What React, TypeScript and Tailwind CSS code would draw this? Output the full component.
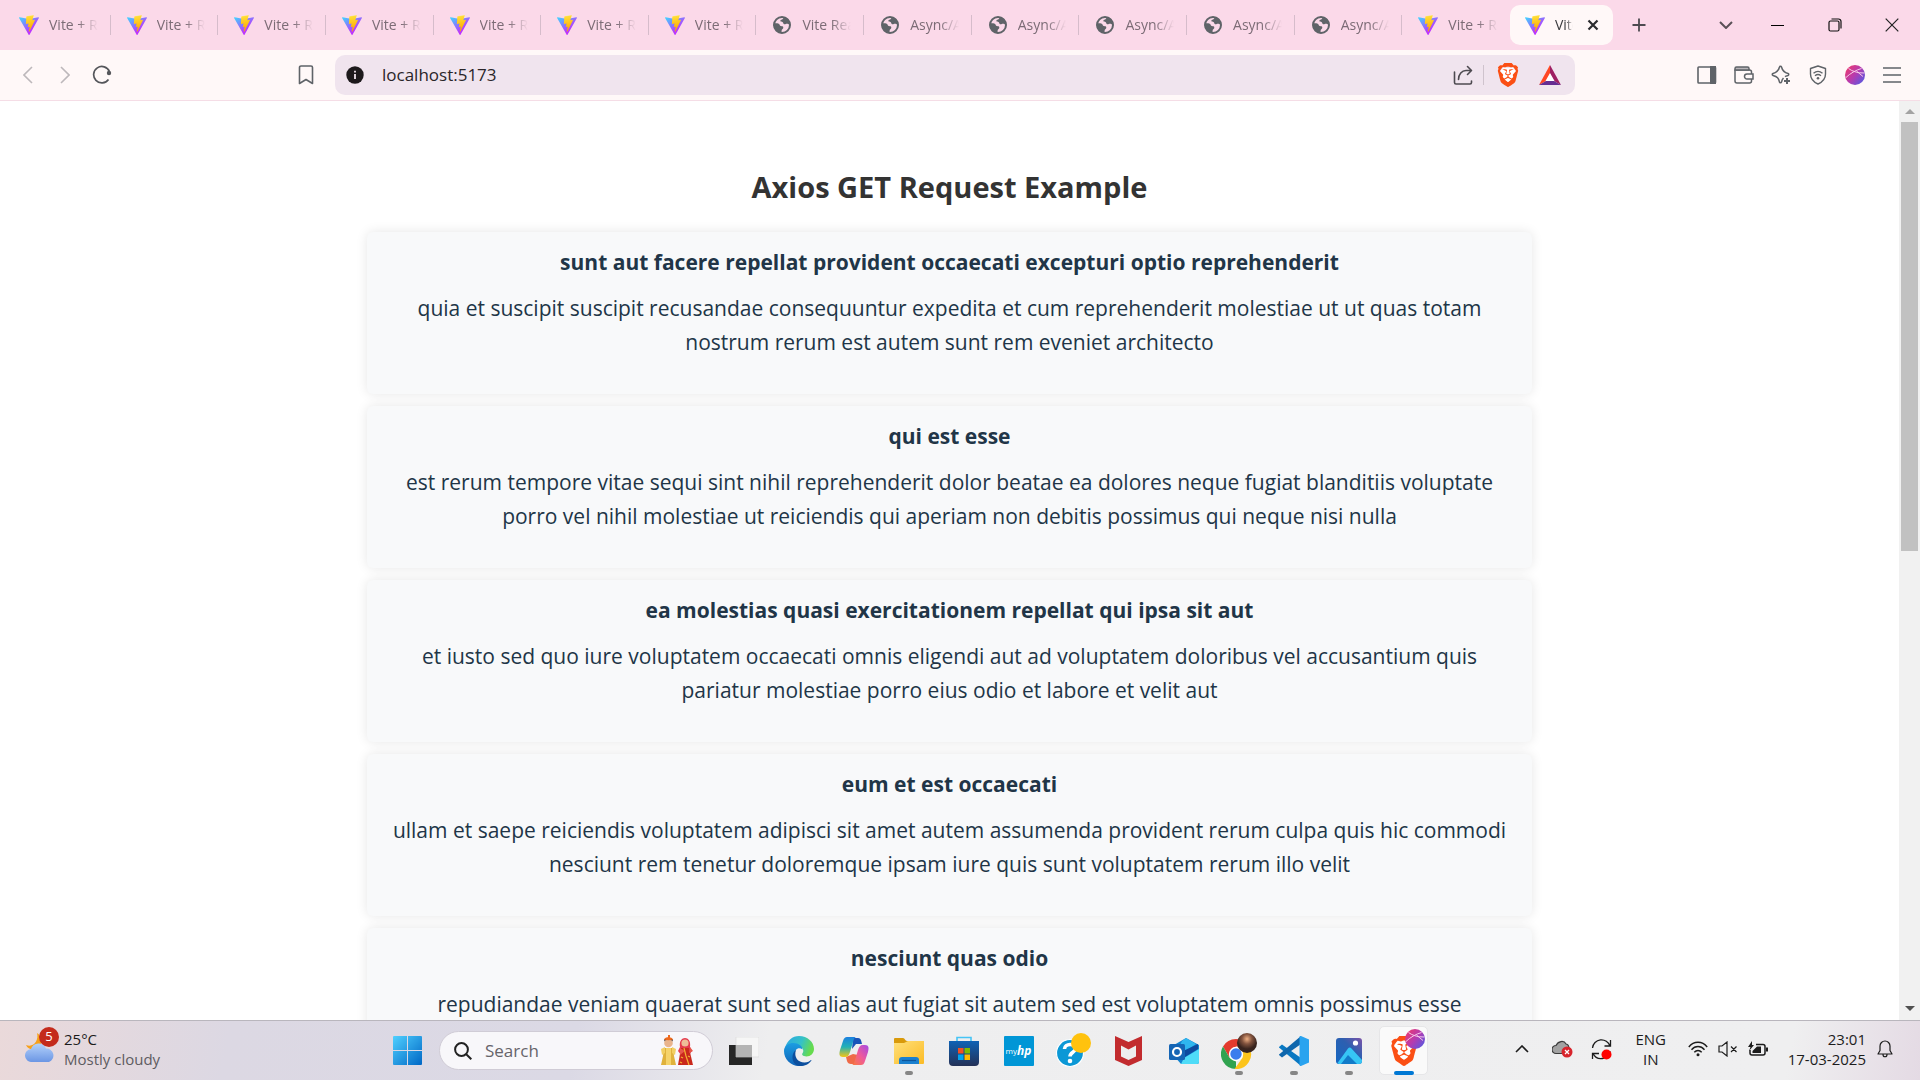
import type { ReactNode } from "react";
import { SiBrave } from "react-icons/si";

type TabKind = "vite" | "globe";
type TabItem = { kind: TabKind; title: string };

const TABS: TabItem[] = [
  ...Array.from({ length: 7 }, (): TabItem => ({ kind: "vite", title: "Vite + React" })),
  { kind: "globe", title: "Vite React" },
  ...Array.from({ length: 5 }, (): TabItem => ({ kind: "globe", title: "Async/Await" })),
  { kind: "vite", title: "Vite + React" },
];

const POSTS = [
  {
    title: "sunt aut facere repellat provident occaecati excepturi optio reprehenderit",
    body: "quia et suscipit suscipit recusandae consequuntur expedita et cum reprehenderit molestiae ut ut quas totam nostrum rerum est autem sunt rem eveniet architecto",
  },
  {
    title: "qui est esse",
    body: "est rerum tempore vitae sequi sint nihil reprehenderit dolor beatae ea dolores neque fugiat blanditiis voluptate porro vel nihil molestiae ut reiciendis qui aperiam non debitis possimus qui neque nisi nulla",
  },
  {
    title: "ea molestias quasi exercitationem repellat qui ipsa sit aut",
    body: "et iusto sed quo iure voluptatem occaecati omnis eligendi aut ad voluptatem doloribus vel accusantium quis pariatur molestiae porro eius odio et labore et velit aut",
  },
  {
    title: "eum et est occaecati",
    body: "ullam et saepe reiciendis voluptatem adipisci sit amet autem assumenda provident rerum culpa quis hic commodi nesciunt rem tenetur doloremque ipsam iure quis sunt voluptatem rerum illo velit",
  },
  {
    title: "nesciunt quas odio",
    body: "repudiandae veniam quaerat sunt sed alias aut fugiat sit autem sed est voluptatem omnis possimus esse voluptatibus quis est aut tenetur dolor neque",
  },
];

function ViteLogo() {
  return (
    <svg viewBox="0 0 256 257" className="size-5 shrink-0">
      <defs>
        <linearGradient id="viteA" x1="-.8%" x2="57.6%" y1="7.7%" y2="78.4%">
          <stop offset="0" stopColor="#41D1FF" />
          <stop offset="1" stopColor="#BD34FE" />
        </linearGradient>
        <linearGradient id="viteB" x1="43.4%" x2="50.3%" y1="2.2%" y2="89%">
          <stop offset="0" stopColor="#FFEA83" />
          <stop offset=".083" stopColor="#FFDD35" />
          <stop offset="1" stopColor="#FFA800" />
        </linearGradient>
      </defs>
      <path fill="url(#viteA)" d="m255.153 37.938l-120.283 215.09c-2.483 4.44-8.862 4.467-11.382.048L.875 38.014c-2.746-4.814 1.371-10.646 6.827-9.67l120.385 21.517a6.537 6.537 0 0 0 2.322-.004l117.867-21.483c5.438-.991 9.574 4.796 6.877 9.564Z" />
      <path fill="url(#viteB)" d="M185.432.063L96.44 17.501a3.268 3.268 0 0 0-2.634 3.014l-5.474 92.456a3.268 3.268 0 0 0 3.997 3.378l24.777-5.718c2.318-.535 4.413 1.507 3.936 3.838l-7.361 36.047c-.495 2.426 1.782 4.5 4.151 3.78l15.304-4.649c2.372-.72 4.652 1.36 4.15 3.788l-11.698 56.621c-.732 3.542 3.979 5.473 5.943 2.437l1.313-2.028l72.516-144.72c1.215-2.423-.88-5.186-3.54-4.672l-25.505 4.922c-2.396.462-4.435-1.77-3.759-4.114l16.646-57.705c.677-2.35-1.37-4.583-3.769-4.113Z" />
    </svg>
  );
}

function GlobeIcon() {
  return (
    <svg viewBox="0 0 20 20" className="size-5 shrink-0">
      <circle cx="10" cy="10" r="8" fill="none" stroke="#5f6368" strokeWidth="2" />
      <path fill="#5f6368" d="M2 8.200c2 .1 4.200-.4 5.200.8.7.9.4 1.800 1.700 2.100 1.200.2 2.500.2 2.400 1.600-.1 1.200-1.300 1.400-1.600 2.400-.2.9-.1 2-.2 3.100C4.500 17.500 1.200 13.600 2 8.200Z" />
      <path fill="#5f6368" d="M11.500 2c-.2 1.300-.2 1.900-1.400 2.400-1.100.4-1.900.6-1.700 1.700.2.900 1.300.6 2.100 1 .9.400.5 1.800 1.600 2.100 1.300.3 1.600-.4 2.800-.4 1 0 1.700.7 3.300.8C18 5 15 2.200 11.500 2Z" />
    </svg>
  );
}

const fade = "overflow-hidden whitespace-nowrap [mask-image:linear-gradient(to_right,black_60%,transparent)]";

function Tab({ tab, divider }: { tab: TabItem; divider: boolean }) {
  return (
    <button type="button" role="tab" aria-selected="false" className="flex min-w-0 flex-1 items-center text-sm text-[#7c6c76]">
      <span className="flex min-w-0 flex-1 items-center gap-[10px] pl-4 pr-3">
        {tab.kind === "vite" ? <ViteLogo /> : <GlobeIcon />}
        <span className={"min-w-0 flex-1 text-left " + fade}>{tab.title}</span>
      </span>
      {divider && <span className="h-5 w-px bg-[#d6bccb]" />}
    </button>
  );
}

function TabStrip() {
  return (
    <header className="flex h-[50px] shrink-0 items-stretch bg-[#fbd9e9]">
      <div role="tablist" className="flex min-w-0 flex-1 items-stretch pl-[3px]">
        {TABS.map((tab, i) => (
          <Tab key={i} tab={tab} divider={i < TABS.length - 1} />
        ))}
        <div className="my-[5px] flex w-[103px] shrink-0 items-center rounded-[10px] bg-[#fff8f8] pl-[15px] pr-[10px]">
          <button type="button" role="tab" aria-selected="true" className="flex min-w-0 flex-1 items-center gap-[10px] text-sm text-[#3b3b3f]">
            <ViteLogo />
            <span className={"w-[18px] " + fade}>Vite + React</span>
          </button>
          <button type="button" aria-label="Close tab" className="flex size-5 items-center justify-center">
            <svg viewBox="0 0 12 12" className="size-3" stroke="#2b2b2e" strokeWidth="2.200"><path d="M1.500 1.500l9 9M10.500 1.500l-9 9" /></svg>
          </button>
        </div>
      </div>
      <div className="flex w-[307px] shrink-0 items-center pl-[10px]">
        <button type="button" aria-label="New tab" className="flex w-8 justify-center">
          <svg viewBox="0 0 14 14" className="size-[14px]" stroke="#4d4a50" strokeWidth="1.800"><path d="M7 .5v13M.5 7h13" /></svg>
        </button>
        <button type="button" aria-label="Search tabs" className="ml-[55px] flex w-8 justify-center">
          <svg viewBox="0 0 14 8" className="h-2 w-[14px]" fill="none" stroke="#5a5057" strokeWidth="2"><path d="M1 1l6 6 6-6" /></svg>
        </button>
        <div className="ml-[7px] flex flex-1 items-center justify-around">
          <button type="button" aria-label="Minimize" className="flex size-8 items-center justify-center"><span className="h-px w-[13px] bg-black" /></button>
          <button type="button" aria-label="Restore" className="flex size-8 items-center justify-center">
            <svg viewBox="0 0 14 14" className="size-[14px]" fill="none" stroke="#111" strokeWidth="1.200"><rect x="1" y="3" width="10" height="10" rx="1.500" /><path d="M3.500 1h7a2.500 2.500 0 0 1 2.500 2.500v7" /></svg>
          </button>
          <button type="button" aria-label="Close" className="flex size-8 items-center justify-center">
            <svg viewBox="0 0 14 14" className="size-[14px]" stroke="#222" strokeWidth="1.200"><path d="M.7.7l12.600 12.600M13.300.7L.7 13.300" /></svg>
          </button>
        </div>
      </div>
    </header>
  );
}

function ToolButton({ label, children }: { label: string; children: ReactNode }) {
  return (
    <button type="button" aria-label={label} className="flex h-8 w-[37px] items-center justify-center text-[#5f6368]">
      {children}
    </button>
  );
}

function ProfileOrb({ id }: { id: string }) {
  return (
    <svg viewBox="0 0 20 20" className="size-5">
      <defs>
        <linearGradient id={id} x1="0" y1=".1" x2="1" y2=".9">
          <stop offset="0" stopColor="#f0396a" />
          <stop offset=".5" stopColor="#b53bb0" />
          <stop offset="1" stopColor="#4f5be6" />
        </linearGradient>
      </defs>
      <circle cx="10" cy="10" r="10" fill={`url(#${id})`} />
      <path d="M3.500 3.500c4 3 9 4.500 15.500 4.500M1 12.500C5 8.500 11 5 16.500 3.500M12 6.500l6 5" fill="none" stroke="#f7c9ea" strokeWidth="1" />
    </svg>
  );
}

function Toolbar() {
  return (
    <div className="flex h-[51px] shrink-0 items-center border-b border-[#f5dde6] bg-[#fff8f8]">
      <div className="flex w-[335px] shrink-0 items-center pl-[9px]">
        <ToolButton label="Back">
          <svg viewBox="0 0 10 18" className="h-[18px] w-[10px]" fill="none" stroke="#bdb8bb" strokeWidth="1.600"><path d="M9 1L1 9l8 8" /></svg>
        </ToolButton>
        <ToolButton label="Forward">
          <svg viewBox="0 0 10 18" className="h-[18px] w-[10px]" fill="none" stroke="#bdb8bb" strokeWidth="1.600"><path d="M1 1l8 8-8 8" /></svg>
        </ToolButton>
        <ToolButton label="Reload">
          <svg viewBox="0 0 20 20" className="size-5" fill="none" stroke="#55565b" strokeWidth="1.700"><path d="M16.500 14.500A8.200 8.200 0 1 1 17.400 6.500" /><circle cx="17" cy="8" r="2.200" fill="#55565b" stroke="none" /></svg>
        </ToolButton>
        <span className="ml-auto mr-[11px]">
          <ToolButton label="Bookmark this tab">
            <svg viewBox="0 0 16 20" className="h-5 w-4" fill="none" stroke="currentColor" strokeWidth="1.600" strokeLinejoin="round"><path d="M1.500 2.500a1.500 1.500 0 0 1 1.500-1.500h10a1.500 1.500 0 0 1 1.500 1.500V18.500L8 14.500l-6.500 4z" /></svg>
          </ToolButton>
        </span>
      </div>
      <div className="flex h-10 min-w-0 flex-1 items-center rounded-[10px] bg-[#f0e4ee] pl-[11px] pr-[9px]">
        <button type="button" aria-label="Site information" className="shrink-0">
          <svg viewBox="0 0 18 18" className="size-[18px]"><circle cx="9" cy="9" r="8.700" fill="#1d191c" /><path d="M9 8v5M9 4.800v1.700" stroke="#f0e4ee" strokeWidth="1.800" /></svg>
        </button>
        <input aria-label="Address" defaultValue="localhost:5173" className="ml-[18px] min-w-0 flex-1 bg-transparent pb-px text-[17px] text-[#2a2529] outline-none" />
        <button type="button" aria-label="Share" className="flex size-8 items-center justify-center">
          <svg viewBox="0 0 20 20" className="size-5" fill="none" stroke="#4d4a50" strokeWidth="1.600" strokeLinecap="round" strokeLinejoin="round"><path d="M1.500 7v10.500a1.500 1.500 0 0 0 1.500 1.500h14a1.500 1.500 0 0 0 1.500-1.500V16M5.500 14.500C5.500 9 9 5.500 13 5.500h5M14.500 1.500l4 4-4 4" /></svg>
        </button>
        <span className="ml-1 h-5 w-px bg-[#cfc3cd]" />
        <button type="button" aria-label="Brave Shields" className="ml-2 flex size-8 items-center justify-center">
          <BraveLion className="size-6" />
        </button>
        <button type="button" aria-label="Brave Rewards" className="ml-[10px] flex size-8 items-center justify-center">
          <svg viewBox="0 0 22 20" className="h-5 w-[22px]"><path fill="#ff4724" d="M11 0L0 20l7-4 4-7z" /><path fill="#9e1f63" d="M11 0l11 20-7-4-4-7z" /><path fill="#662d91" d="M0 20h22l-7-4H7z" /><path fill="#fff" d="M11 8l-4.500 8h9z" /></svg>
        </button>
      </div>
      <div className="flex w-[345px] shrink-0 items-center justify-end pr-[10px]">
        <ToolButton label="Sidebar">
          <svg viewBox="0 0 20 18" className="h-[18px] w-5"><rect x="1" y="1" width="17.500" height="16" rx=".8" fill="none" stroke="currentColor" strokeWidth="1.600" /><path fill="currentColor" d="M13 0h6v18h-6z" /></svg>
        </ToolButton>
        <ToolButton label="Wallet">
          <svg viewBox="0 0 20 18" className="h-[18px] w-5" fill="none" stroke="currentColor" strokeWidth="1.500"><path d="M1 3.500V15a2 2 0 0 0 2 2h12.500a2 2 0 0 0 2-2V6a2 2 0 0 0-2-2H2" /><path fill="#b9b5b9" d="M1 4V2.500A1.500 1.500 0 0 1 2.500 1h11A1.500 1.500 0 0 1 15 2.500V4z" /><path fill="#fff8f8" d="M19 8h-6a2.500 2.500 0 0 0 0 5h6z" /></svg>
        </ToolButton>
        <ToolButton label="Leo AI">
          <svg viewBox="0 0 20 20" className="size-5" fill="none" stroke="currentColor" strokeWidth="1.500" strokeLinejoin="round"><path d="M12.500 13c-1 1-1.500 2-2 4-.3 1-1.800 1-2 0-1-4-2-5.200-6.500-6.500-1-.3-1-1.700 0-2C6 7.500 7.500 6 8.500 2c.2-1 1.700-1 2 0 1 4 2.500 5.500 6.500 6.500 1 .3 1 1.700 0 2-1.500.4-2.500.8-3 1.200" /><path d="M16 13v6M13 16h6" strokeWidth="2" /></svg>
        </ToolButton>
        <ToolButton label="VPN">
          <svg viewBox="0 0 18 20" className="h-5 w-[18px]" fill="none" stroke="currentColor" strokeWidth="1.400"><path d="M9 1l7.500 2.500V9c0 5-3 8-7.500 10-4.500-2-7.500-5-7.500-10V3.500z" strokeLinejoin="round" /><path d="M4.500 8.200c2.800-2.300 6.200-2.300 9 0M6 10.700c1.900-1.500 4.100-1.500 6 0" /><circle cx="9" cy="13.200" r="1.300" fill="currentColor" stroke="none" /></svg>
        </ToolButton>
        <ToolButton label="Profile"><ProfileOrb id="orbToolbar" /></ToolButton>
        <ToolButton label="Menu">
          <svg viewBox="0 0 18 16" className="h-4 w-[18px]" stroke="currentColor" strokeWidth="1.500"><path d="M0 1h18M0 8h18M0 15h18" /></svg>
        </ToolButton>
      </div>
    </div>
  );
}

function BraveLion({ className }: { className: string }) {
  return (
    <span className={"relative flex items-center justify-center " + className}>
      <svg viewBox="0 0 24 24" className="absolute size-full"><path fill="#fff" d="M7 5h10l3 3-2 9-6 5-6-5-2-9z" /></svg>
      <SiBrave className="relative size-full text-[#fb4f14]" />
    </span>
  );
}

function Page() {
  return (
    <div className="flex min-h-0 flex-1 bg-white">
      <main className="min-w-0 flex-1 overflow-hidden px-10 pt-[62px] text-center">
        <h2 className="text-[29px] font-bold leading-[48px] text-[#333333]">Axios GET Request Example</h2>
        <div className="mx-auto mt-[21px] flex max-w-[1165px] flex-col gap-3">
          {POSTS.map((post) => (
            <article key={post.title} className="rounded-md bg-[#f8f9fa] px-[18px] pb-[35px] pt-[13px] text-[#213547] shadow-[0_0_12px_rgba(0,0,0,0.1)]">
              <h3 className="text-[21px] font-bold leading-[34px]">{post.title}</h3>
              <p className="mt-3 text-[21px] leading-[34px]">{post.body}</p>
            </article>
          ))}
        </div>
      </main>
      <div aria-hidden="true" className="flex w-[21px] shrink-0 flex-col items-center justify-between bg-[#f1f1f1]">
        <div className="flex w-full flex-col items-center">
          <svg viewBox="0 0 10 5" className="my-2 h-[5px] w-[10px]"><path fill="#a3a3a3" d="M5 0l5 5H0z" /></svg>
          <span className="h-[429px] w-[17px] bg-[#c1c1c1]" />
        </div>
        <svg viewBox="0 0 10 5" className="mb-[9px] h-[5px] w-[10px]"><path fill="#505050" d="M5 5l5-5H0z" /></svg>
      </div>
    </div>
  );
}

function TaskItem({ label, running, active, children }: { label: string; running?: boolean; active?: boolean; children: ReactNode }) {
  return (
    <button type="button" aria-label={label} className="relative flex h-full w-[55px] items-center justify-center">
      {active && <span className="absolute inset-x-[3px] inset-y-[5px] rounded-[5px] border border-[#e6e6e8] bg-[#fafafa]" />}
      <span className="relative">{children}</span>
      {running && <span className="absolute bottom-[5px] h-1 w-2 rounded-full bg-[#868686]" />}
      {active && <span className="absolute bottom-[5px] h-1 w-5 rounded-full bg-[#0078d4]" />}
    </button>
  );
}

function SearchFigures() {
  return (
    <svg viewBox="0 0 34 32" className="h-8 w-[34px] shrink-0">
      <path fill="#e0b23c" d="M4 13h9l1 8 2 9H1l2-9z" />
      <path fill="#f2cf63" d="M1 14l4-2v6l-3 2zM16 14l-4-2v6l3 2z" />
      <path fill="#f5d36b" d="M6 13h5v17H6z" />
      <circle cx="8.500" cy="8" r="4.300" fill="#e9b48c" />
      <path fill="#2c1a14" d="M4 7c0-3 9-3 9 0l-.5-3h-8z" />
      <path fill="#ee6a1e" d="M4 4.500C5 1 12 1 13 4.500c-3 1-6 1-9 0zM8 0h2v3H8z" />
      <path fill="#e4394d" d="M20 12c-2-12 12-12 10 0l2 4-3 4h-8l-3-4z" />
      <circle cx="25" cy="8" r="3.600" fill="#eebd98" />
      <path fill="#c9281c" d="M21 13h8l4 17H18z" />
      <path fill="#e7574a" d="M20 13l5 3-5 4zM30 12l3 4-4 2z" />
      <path stroke="#f5b133" strokeWidth="1.200" fill="none" d="M24 13l2 8 3 9M21 22l2 1M20 27l2 1M28 21l2 1" />
    </svg>
  );
}

function Taskbar() {
  return (
    <footer className="flex h-[60px] shrink-0 items-stretch border-t border-[#b9b6bd] bg-[linear-gradient(100deg,#ead9da_0%,#dcd8e3_12%,#dbd9e5_30%,#eeeeef_40%,#efeff0_93%,#e4dae4_100%)]">
      <div className="flex w-[380px] shrink-0 items-center pl-[25px]">
        <button type="button" className="flex items-center pb-[3px] text-left">
          <span className="relative mb-1 block w-[39px]">
            <svg viewBox="0 0 30 30" className="size-[30px]">
              <defs><linearGradient id="cloud" x2="0" y2="1"><stop stopColor="#b4d2fb" /><stop offset="1" stopColor="#6b96e4" /></linearGradient></defs>
              <path fill="#f7a11b" d="M12 1c2 7-3 15-11 12 2 5 9 6 13 2s3-11-2-14z" />
              <path fill="url(#cloud)" d="M7 30a6.500 6.500 0 0 1-1-13 8 8 0 0 1 15-.5A7 7 0 0 1 24 30z" />
            </svg>
            <span className="absolute -top-[5px] left-[14px] flex size-5 items-center justify-center rounded-full bg-[#c42b1c] text-[13px] text-white">5</span>
          </span>
          <span className="flex flex-col text-[15px] leading-5">
            <span className="text-[#1b1b1b]">25°C</span>
            <span className="text-[#5e5c61]">Mostly cloudy</span>
          </span>
        </button>
      </div>
      <nav aria-label="Taskbar" className="flex shrink-0 items-center">
        <TaskItem label="Start">
          <svg viewBox="0 0 29 29" className="size-[29px]">
            <defs><linearGradient id="win" x2="1" y2="1" gradientUnits="objectBoundingBox"><stop stopColor="#4fd0ff" /><stop offset="1" stopColor="#0067c5" /></linearGradient></defs>
            <path fill="url(#win)" d="M1 0h13v14H0V1a1 1 0 0 1 1-1zM15 0h13a1 1 0 0 1 1 1v13H15zM0 15h14v14H1a1 1 0 0 1-1-1zM15 15h14v13a1 1 0 0 1-1 1H15z" />
          </svg>
        </TaskItem>
        <label className="ml-1 mr-[3px] flex h-[39px] w-[274px] items-center rounded-full border border-[#d0ccd6] bg-[#f8f7fa] pl-[14px] pr-[18px]">
          <svg viewBox="0 0 18 18" className="size-[18px] shrink-0" fill="none" stroke="#222" strokeWidth="2"><circle cx="7.500" cy="7.500" r="6.400" /><path d="M12 12l5.300 5.300" /></svg>
          <input type="search" aria-label="Search" placeholder="Search" className="ml-[13px] min-w-0 flex-1 bg-transparent text-[17px] outline-none placeholder:text-[#66646a]" />
          <SearchFigures />
        </label>
        <TaskItem label="Task view">
          <svg viewBox="0 0 30 28" className="h-7 w-[30px]"><path fill="#262626" d="M0 8h23v20H0z" /><path fill="#f6f6f6" stroke="#d8d8d8" strokeWidth=".6" d="M7 0h23v20H7z" /><path fill="#b4b4b4" d="M7 8h16v12H7z" /></svg>
        </TaskItem>
        <TaskItem label="Edge">
          <svg viewBox="0 0 30 30" className="size-[30px]">
            <defs>
              <linearGradient id="edgeA" x2="1" y2=".3"><stop stopColor="#2aa7e4" /><stop offset=".6" stopColor="#35c1c8" /><stop offset="1" stopColor="#66db4e" /></linearGradient>
              <linearGradient id="edgeB" x2="0" y2="1"><stop stopColor="#1b9de2" /><stop offset="1" stopColor="#1063b8" /></linearGradient>
            </defs>
            <path fill="url(#edgeA)" d="M1 12C3 4.500 8.500 0 15 0c8.500 0 15 6 15 13 0 4.500-3.500 7.500-7.500 7.500-4 0-5-2-4-3.200 1.500-1.800 1-5.300-2.500-6.800C11 8.500 4 9 1 12z" />
            <path fill="url(#edgeB)" d="M0 15C0 9.500 5 7 9.500 7c5 0 9 3 9 6.500-4-3-8 0-8 5C10.500 25 15 29 20 29c-2 .8-3.500 1-5 1C6.500 30 0 23 0 15z" />
            <path fill="#0c4f9e" d="M12 14c-2.500 7 2 12.500 8.500 12.500 3 0 5.500-1.500 6.500-2.500.5 0 .5.500 0 1-2 3-6 5-11 5C8 30 6 18 12 14z" />
          </svg>
        </TaskItem>
        <TaskItem label="Copilot">
          <svg viewBox="0 0 30 28" className="h-7 w-[30px]">
            <defs>
              <linearGradient id="copA" x2="0" y2="1"><stop stopColor="#1b7fe0" /><stop offset=".5" stopColor="#23b2b5" /><stop offset="1" stopColor="#f6c614" /></linearGradient>
              <linearGradient id="copB" x1="1" x2="0" y2="1"><stop stopColor="#a348e5" /><stop offset=".5" stopColor="#ee5a9c" /><stop offset="1" stopColor="#fb7b3c" /></linearGradient>
            </defs>
            <path fill="#1854b8" d="M14 1h5c2 0 3 1.500 3.500 4L23 7h-6l-4 5z" />
            <path fill="#ef6a48" d="M7 20l1 4c.5 2 2 3 4 3h4l3-9-5-1z" />
            <path fill="url(#copA)" d="M8 0h9c-1.500.5-2.200 2-3 5l-3 10c-1 3-2 5-5 5H4c-4 0-4-3-3-7l3-9c1-3 2-4 4-4z" />
            <path fill="url(#copB)" d="M22 28h-9c1.500-.5 2.200-2 3-5l3-10c1-3 2-5 5-5h2c4 0 4 3 3 7l-3 9c-1 3-2 4-4 4z" />
          </svg>
        </TaskItem>
        <TaskItem label="File Explorer" running>
          <svg viewBox="0 0 30 26" className="h-[26px] w-[30px]">
            <defs><linearGradient id="fold" x2="1" y2="1"><stop stopColor="#ffe07a" /><stop offset="1" stopColor="#fbbb25" /></linearGradient></defs>
            <path fill="#d99a0b" d="M0 1a1 1 0 0 1 1-1h8c2 0 2 3 4 3h3v4H0z" />
            <path fill="url(#fold)" d="M0 5h10l4-2h16v22a1 1 0 0 1-1 1H0z" />
            <path fill="#1a80cf" d="M5 26v-4a3 3 0 0 1 3-3h14a3 3 0 0 1 3 3v4z" /><path stroke="#0c559b" strokeWidth="1.200" d="M8 22.500h14" />
          </svg>
        </TaskItem>
        <TaskItem label="Microsoft Store">
          <svg viewBox="0 0 30 30" className="size-[30px]">
            <defs><linearGradient id="store" x2="0" y2="1"><stop stopColor="#0f62b5" /><stop offset="1" stopColor="#243157" /></linearGradient></defs>
            <path fill="none" stroke="#45c4f5" strokeWidth="1.600" d="M8 5V1.500h14V5" />
            <path fill="url(#store)" d="M0 5h30v21a4 4 0 0 1-4 4H4a4 4 0 0 1-4-4z" />
            <path fill="#f25022" d="M9 12h5.500v5.500H9z" /><path fill="#7fba00" d="M15.500 12H21v5.500h-5.500z" /><path fill="#00a4ef" d="M9 18.500h5.500V24H9z" /><path fill="#ffb900" d="M15.500 18.500H21V24h-5.500z" />
          </svg>
        </TaskItem>
        <TaskItem label="myHP">
          <span className="flex size-[30px] items-center justify-center rounded-[1px] bg-[#0096d6] text-white">
            <span className="text-[8px]">my</span>
            <span className="text-xs font-bold italic">hp</span>
          </span>
        </TaskItem>
        <TaskItem label="Help">
          <svg viewBox="0 0 35 35" className="h-[35px] w-[35px]">
            <circle cx="14" cy="20" r="13.500" fill="#0b98d6" stroke="#fff" strokeWidth="1.200" />
            <path fill="none" stroke="#fff" strokeWidth="3.600" d="M8.500 16c0-6 11-6 11-.5 0 4-5.500 3.500-5.500 8" /><circle cx="14" cy="28" r="2.300" fill="#fff" />
            <circle cx="25" cy="10" r="10" fill="#ffc20e" />
          </svg>
        </TaskItem>
        <TaskItem label="McAfee">
          <svg viewBox="0 0 27 30" className="h-[30px] w-[27px]"><path fill="#c22b2e" d="M0 0l13.500 6L27 0v24l-13.500 6L0 24z" /><path fill="#ededee" d="M6 9.500l7.500 4 7.500-4v11L13.500 24 6 20.500z" /></svg>
        </TaskItem>
        <TaskItem label="Outlook">
          <svg viewBox="0 0 30 26" className="h-[26px] w-[30px]">
            <path fill="#1183d0" d="M5 7L17 0l13 7v17a2 2 0 0 1-2 2H12L5 18z" /><path fill="#2fb6ef" d="M13 3l4-3 10 6-12 8-5-4z" /><path fill="#0d4a9e" d="M29 6v5L16 19l-4-5z" /><path fill="#4fdcf8" d="M30 11v13a2 2 0 0 1-2 2H12l3-6z" />
            <rect y="6" width="16" height="16" rx="1.500" fill="#1565b5" /><circle cx="8" cy="14" r="4" fill="none" stroke="#fff" strokeWidth="2.200" />
          </svg>
        </TaskItem>
        <TaskItem label="Chrome" running>
          <svg viewBox="0 0 36 36" className="size-9">
            <defs><radialGradient id="avatar" cy=".3"><stop stopColor="#f0b184" /><stop offset=".5" stopColor="#82533e" /><stop offset="1" stopColor="#38241e" /></radialGradient></defs>
            <path fill="#e33b2e" d="M15 6a15 15 0 0 1 13 7.500H15L8.500 24.700 2 13.500A15 15 0 0 1 15 6z" />
            <path fill="#31a350" d="M2 13.500l6.500 11.200L15 28.500 15 36A15 15 0 0 1 2 13.500z" />
            <path fill="#fcc41c" d="M28 13.500A15 15 0 0 1 13.500 36L21.500 24.700 21.500 13.500z" />
            <circle cx="15" cy="21" r="7.200" fill="#fff" /><circle cx="15" cy="21" r="5.700" fill="#3b7ded" />
            <circle cx="26" cy="10" r="10" fill="url(#avatar)" />
          </svg>
        </TaskItem>
        <TaskItem label="Visual Studio Code" running>
          <svg viewBox="0 0 30 30" className="size-[30px]"><path fill="#0a78c2" d="M0 11l3-2.500 19 13.500v8L0 11.500z" /><path fill="#0f67ad" d="M0 19l3 2.500L22 8V0L0 18.500z" /><path fill="#2aa3ef" d="M22 0l8 3.500v23L22 30c-1 .2-1.500-.5-1.500-1V1c0-.7.5-1.200 1.500-1z" /></svg>
        </TaskItem>
        <TaskItem label="Photos" running>
          <svg viewBox="0 0 26 26" className="size-[26px]">
            <defs><linearGradient id="photo" x1="0" y1="1" x2="1" y2="0"><stop stopColor="#1467c2" /><stop offset=".6" stopColor="#2d5fb0" /><stop offset="1" stopColor="#7c53a8" /></linearGradient></defs>
            <rect width="26" height="26" rx="3" fill="url(#photo)" /><path fill="#36c5f5" d="M1.500 25L12 10.500c1-1.300 2.500-1.300 3.500 0L26 22v1a3 3 0 0 1-3 3H3z" /><path fill="#127bc9" d="M12 17l-7 9h16z" /><circle cx="19.500" cy="5" r="2.600" fill="#fff" />
          </svg>
        </TaskItem>
        <TaskItem label="Brave" active>
          <span className="relative block">
            <BraveLion className="size-[30px]" />
            <span className="absolute -top-[7px] left-4"><ProfileOrb id="orbTask" /></span>
          </span>
        </TaskItem>
      </nav>
      <div className="ml-auto flex items-center pb-[3px] pr-[27px] text-[15px] leading-5 text-[#1c1c1c]">
        <button type="button" aria-label="Show hidden icons" className="px-3"><svg viewBox="0 0 14 8" className="h-2 w-[14px]" fill="none" stroke="currentColor" strokeWidth="1.600"><path d="M1 7l6-6 6 6" /></svg></button>
        <button type="button" aria-label="OneDrive" className="ml-[11px]">
          <svg viewBox="0 0 21 18" className="h-[18px] w-[21px]"><path fill="#a2a2a2" stroke="#3b3b3b" strokeWidth="1.200" d="M4 13.500a4 4 0 0 1 0-8C6 1 12 0 14 4c4 .5 4 9.500 0 9.500z" /><circle cx="15" cy="12" r="5.500" fill="#d8242c" /><path stroke="#fff" strokeWidth="1.300" d="M13 10l4 4M17 10l-4 4" /></svg>
        </button>
        <button type="button" aria-label="Windows Update" className="ml-[18px]">
          <svg viewBox="0 0 21 21" className="size-[21px]" fill="none" stroke="currentColor" strokeWidth="1.300"><path d="M1.500 9A9 9 0 0 1 19 7M19.500 1v6h-6M19 12a9 9 0 0 1-17 2.500M1.500 20v-5.500H8" /><circle cx="15.500" cy="15.500" r="5" fill="#f00" stroke="none" /></svg>
        </button>
        <button type="button" className="ml-[15px] w-12 text-center">ENG<br />IN</button>
        <button type="button" aria-label="Network, sound and battery" className="ml-[13px] flex items-center gap-[10px]">
          <svg viewBox="0 0 20 16" className="h-4 w-5" fill="none" stroke="currentColor" strokeWidth="1.400"><path d="M.8 6c5-6.300 13.400-6.300 18.400 0M3.500 8.700c3.600-4.300 9.400-4.300 13 0M6.300 11.300c2.200-2.400 5.200-2.400 7.400 0" /><circle cx="10" cy="13.800" r="1.500" fill="currentColor" stroke="none" /></svg>
          <svg viewBox="0 0 20 16" className="h-4 w-5" fill="none" stroke="currentColor" strokeWidth="1.200"><path d="M1 5h3l5-4v14l-5-4H1zM13 5.500l5.500 5.500M18.500 5.500L13 11" /></svg>
          <svg viewBox="0 0 20 16" className="h-4 w-5"><path fill="none" stroke="currentColor" strokeWidth="1.500" d="M8 3.500h7a2 2 0 0 1 2 2V12a2 2 0 0 1-2 2H4a2 2 0 0 1-2-2V9" /><path fill="currentColor" d="M4.500 10L9 5.500h4V12H4.500zM18 6.500h2v4h-2zM4 0L0 6h2.500L1 10l5-6H4z" /></svg>
        </button>
        <button type="button" className="ml-5 text-right">23:01<br />17-03-2025</button>
        <button type="button" aria-label="Notifications" className="ml-[11px]">
          <svg viewBox="0 0 16 18" className="h-[18px] w-4" fill="none" stroke="currentColor" strokeWidth="1.200" strokeLinejoin="round"><path d="M8 1a5 5 0 0 0-5 5v4.500L1 14h14l-2-3.500V6a5 5 0 0 0-5-5zM6 14.500c0 3 4 3 4 0" /></svg>
        </button>
      </div>
    </footer>
  );
}

export default function App() {
  return (
    <div className="flex h-screen flex-col overflow-hidden bg-white font-['Open_Sans','Noto_Sans',sans-serif]">
      <TabStrip />
      <Toolbar />
      <Page />
      <Taskbar />
    </div>
  );
}
